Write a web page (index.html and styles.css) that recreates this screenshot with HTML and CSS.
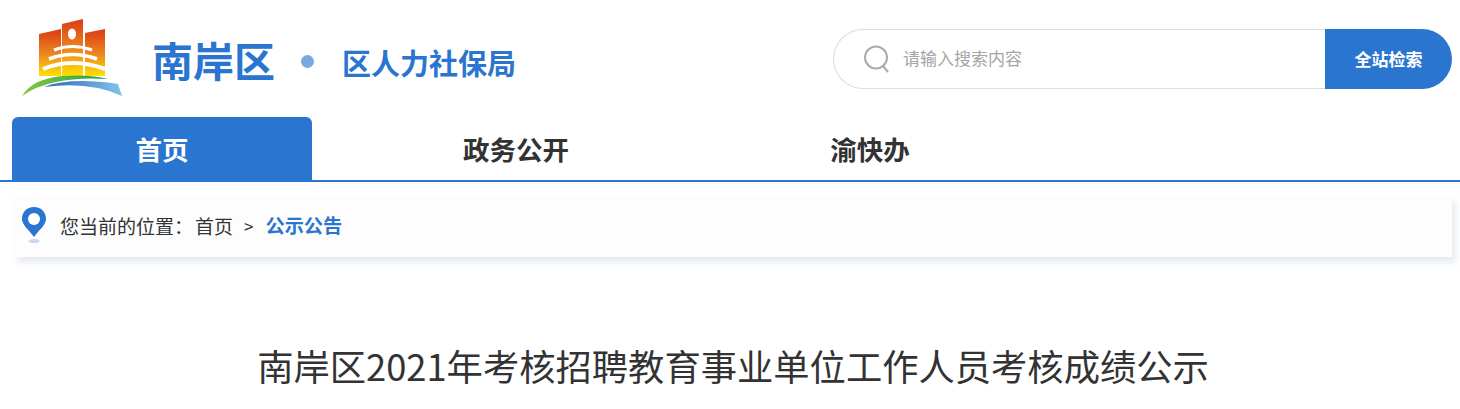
FILE: index.html
```html
<!DOCTYPE html>
<html lang="zh-CN">
<head>
  <meta charset="UTF-8">
  <title>南岸区2021年考核招聘教育事业单位工作人员考核成绩公示</title>
  <meta name="viewport" content="width=device-width, initial-scale=1.0">
  <link rel="stylesheet" href="styles.css">
</head>
<body>

  <!-- cabecalho: logo e busca -->
  <div class="header">
    <div class="brand">
      <svg class="logo" viewBox="0 0 108 80" width="108" height="80">
        <defs>
          <linearGradient id="grad-predio" x1="0" y1="0" x2="0" y2="1">
            <stop offset="0" stop-color="#dc3a17"/>
            <stop offset="0.55" stop-color="#ec8a1e"/>
            <stop offset="1" stop-color="#ffe000"/>
          </linearGradient>
          <linearGradient id="grad-verde" x1="0" y1="0" x2="1" y2="0">
            <stop offset="0" stop-color="#8cc63f"/>
            <stop offset="1" stop-color="#1f9e4a"/>
          </linearGradient>
          <linearGradient id="grad-azul" x1="0" y1="0" x2="1" y2="0">
            <stop offset="0" stop-color="#2f64b5"/>
            <stop offset="1" stop-color="#82c4ec"/>
          </linearGradient>
        </defs>
        <!-- tres torres -->
        <path d="M19 15 L41 10 V57 H19 Z" fill="url(#grad-predio)"/>
        <path d="M42 5 L63 0 V57 H42 Z" fill="url(#grad-predio)"/>
        <path d="M65 14 L85 10 V57 H65 Z" fill="url(#grad-predio)"/>
        <ellipse cx="52" cy="15" rx="4" ry="5.500" fill="#fff"/>
        <!-- anéis do templo -->
        <path d="M34 31 Q52 24 72 31" fill="none" stroke="#fff" stroke-width="3"/>
        <path d="M29 40 Q52 31 77 40" fill="none" stroke="#fff" stroke-width="3.500"/>
        <path d="M23 50 Q52 38 85 50" fill="none" stroke="#fff" stroke-width="4"/>
        <!-- arcos embaixo -->
        <path d="M2 77 Q12 60 42 57 Q70 55 88 60 Q58 58 36 63 Q16 67 2 77 Z" fill="url(#grad-verde)"/>
        <path d="M24 68 Q50 58 98 65 L102 77 Q70 62 24 68 Z" fill="url(#grad-azul)"/>
      </svg>
      <span class="brand-name">南岸区</span>
      <i class="brand-dot"></i>
      <span class="brand-sub">区人力社保局</span>
    </div>
    <div class="search">
      <div class="search-box">
        <svg class="search-icon" viewBox="0 0 28 28" width="28" height="28">
          <circle cx="13" cy="12.500" r="11" fill="none" stroke="#aaa" stroke-width="2"/>
          <line x1="20" y1="21" x2="25" y2="27" stroke="#aaa" stroke-width="2"/>
        </svg>
        <input type="text" placeholder="请输入搜索内容">
      </div>
      <button class="search-btn">全站检索</button>
    </div>
  </div>

  <!-- menu -->
  <div class="nav">
    <a class="nav-item active">首页</a>
    <a class="nav-item">政务公开</a>
    <a class="nav-item">渝快办</a>
  </div>

  <!-- localizacao -->
  <div class="crumb">
    <svg class="pin" viewBox="1 0 24 36" width="24" height="36">
      <path d="M13 0 C5.500 0 1 5.500 1 12 C1 18 8 23 13 30 C18 23 25 18 25 12 C25 5.500 20.500 0 13 0 Z" fill="#2a75cf"/>
      <circle cx="13" cy="12" r="6" fill="#fff"/>
      <ellipse cx="13" cy="34" rx="5.500" ry="2" fill="#c5d8ee"/>
    </svg>
    <span>您当前的位置：</span>
    <span class="crumb-home">首页</span>
    <span class="crumb-sep">&gt;</span>
    <span class="crumb-now">公示公告</span>
  </div>

  <h1 class="titulo">南岸区2021年考核招聘教育事业单位工作人员考核成绩公示</h1>

</body>
</html>
```

FILE: styles.css
```css
body {
  margin: 0;
  font-family: "Noto Sans CJK SC", "Liberation Sans", sans-serif;
  background: #fff;
  color: #333;
  overflow-x: hidden;
}

/* ---------- cabecalho ---------- */
.header {
  display: flex;
  justify-content: space-between;
  height: 117px;
  padding: 0 8px 0 20px;
  box-sizing: border-box;
}
.brand {
  display: flex;
  align-items: center;
  height: 117px;
}
.brand-name {
  margin-left: 24px;
  font-size: 41px;
  font-weight: 700;
  color: #2a75cf;
}
.brand-dot {
  width: 13px;
  height: 13px;
  margin-left: 26px;
  margin-top: 6px;
  border-radius: 50%;
  background: #7aa9e0;
}
.brand-sub {
  margin-left: 28px;
  margin-top: 7px;
  font-size: 29px;
  font-weight: 700;
  color: #2a75cf;
}

.search {
  display: flex;
  width: 619px;
  height: 60px;
  margin-top: 29px;
}
.search-box {
  flex: 1;
  display: flex;
  align-items: center;
  gap: 12px;
  padding-left: 29px;
  border: 1px solid #ddd;
  border-right: none;
  border-radius: 30px 0 0 30px;
}
.search-icon {
  flex: none;
}
.search-box input {
  flex: 1;
  margin-bottom: 3px;
  border: none;
  outline: none;
  padding: 0;
  font-family: inherit;
  font-size: 17px;
  background: transparent;
}
.search-box input::placeholder {
  color: #a5a5a5;
  opacity: 1;
}
.search-btn {
  width: 127px;
  padding: 0 0 2px;
  border: none;
  border-radius: 0 30px 30px 0;
  background: #2a75cf;
  color: #fff;
  font-family: inherit;
  font-size: 17px;
  font-weight: 700;
}

/* ---------- menu ---------- */
.nav {
  display: flex;
  gap: 54px;
  height: 63px;
  padding-left: 12px;
  border-bottom: 2px solid #2a75cf;
}
.nav-item {
  width: 300px;
  line-height: 64px;
  text-align: center;
  font-size: 26.500px;
  font-weight: 700;
  color: #333;
}
.nav-item.active {
  background: #2a75cf;
  color: #fff;
  border-radius: 6px 6px 0 0;
}

/* ---------- localizacao ---------- */
.crumb {
  display: flex;
  align-items: center;
  width: 1438px;
  height: 62px;
  margin: 13px 0 0 14px;
  padding: 0 0 2px 8px;
  box-sizing: border-box;
  background: #fdfdfe;
  box-shadow: 4px 6px 6px rgba(190, 200, 215, 0.35);
  font-size: 19px;
  color: #333;
}
.pin {
  margin-right: 14px;
}
.crumb-home {
  margin-left: 2px;
}
.crumb-sep {
  margin: 0 12px 0 11px;
  font-size: 17px;
}
.crumb-now {
  font-size: 19.200px;
  font-weight: 700;
  color: #2a75cf;
}

/* ---------- titulo ---------- */
.titulo {
  margin: 81px 0 0 14px;
  width: 1438px;
  text-align: center;
  font-size: 36.300px;
  font-weight: 400;
  line-height: 54px;
  color: #333;
}
```
